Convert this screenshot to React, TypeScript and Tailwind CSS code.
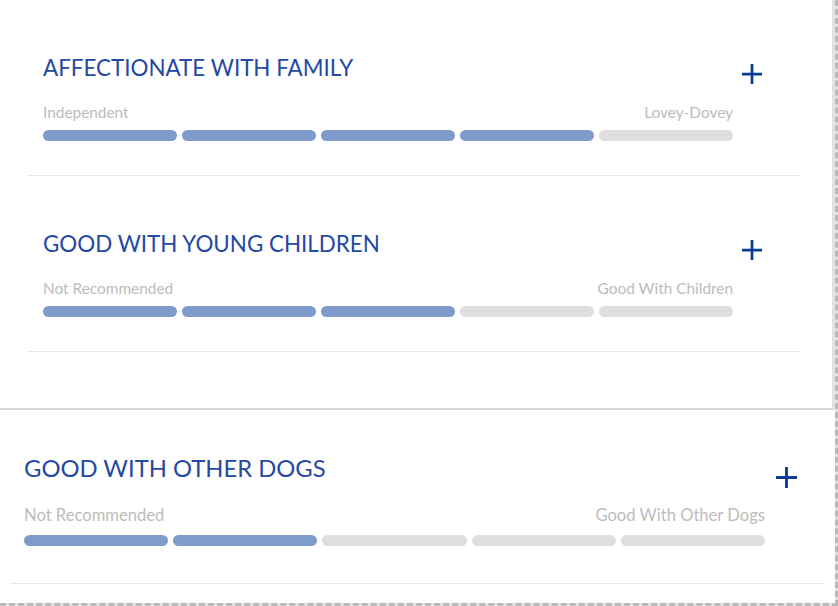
import React from "react";

type Trait = {
  title: string;
  low: string;
  high: string;
  score: number;
};

const topTraits: Trait[] = [
  { title: "AFFECTIONATE WITH FAMILY", low: "Independent", high: "Lovey-Dovey", score: 4 },
  { title: "GOOD WITH YOUNG CHILDREN", low: "Not Recommended", high: "Good With Children", score: 3 },
];

const bottomTrait: Trait = {
  title: "GOOD WITH OTHER DOGS",
  low: "Not Recommended",
  high: "Good With Other Dogs",
  score: 2,
};

const Plus = ({ size }: { size: number }) => (
  <svg width={size} height={size} viewBox="0 0 24 24" className="text-[#0b3c99]">
    <path d="M12 1v22M1 12h22" stroke="currentColor" strokeWidth="3" fill="none" />
  </svg>
);

const Bars = ({ score }: { score: number }) => (
  <div className="flex gap-[5px]">
    {[1, 2, 3, 4, 5].map((i) => (
      <div
        key={i}
        className={
          "flex-1 h-[11px] rounded-full " +
          (i <= score ? "bg-[#7f9bc9]" : "bg-[#dedede]")
        }
      />
    ))}
  </div>
);

const TraitRow = ({ trait }: { trait: Trait }) => (
  <div className="ml-[27px] mr-[32px] h-[176px] border-b border-[#e9e9e9] px-4 pt-[54px] flex items-start">
    <div className="w-[690px]">
      <h3 className="text-[22.4px] leading-[28px] text-[#2649a3]">{trait.title}</h3>
      <div className="mt-[21px] flex justify-between text-[15.4px] leading-[18px] text-[#bcbcbc]">
        <span>{trait.low}</span>
        <span>{trait.high}</span>
      </div>
      <div className="mt-[9px]">
        <Bars score={trait.score} />
      </div>
    </div>
    <div className="ml-2 mt-[9px]">
      <Plus size={22} />
    </div>
  </div>
);

export default function App() {
  return (
    <div
      className="w-[838px] h-[606px] overflow-hidden bg-[#e4e4e4] border-r-[3px] border-b-[3px] border-dashed border-[#b9b9b9]"
      style={{ fontFamily: "Lato, 'Open Sans', sans-serif" }}
    >
      <div className="w-[834px] h-[410px] bg-white border-r-2 border-[#e2e2e2] border-b-2 border-b-[#d6d6d6]">
        {topTraits.map((t) => (
          <TraitRow key={t.title} trait={t} />
        ))}
      </div>
      <div className="w-[835px] h-[193px] bg-white">
        <div className="mx-[10px] h-[174px] border-b border-[#e9e9e9] pl-[14px] pt-[43px] flex items-start">
          <div className="w-[741px]">
            <h3 className="text-[23.8px] leading-[30px] text-[#2649a3]">{bottomTrait.title}</h3>
            <div className="mt-[23px] flex justify-between text-[16.6px] leading-[19px] text-[#bcbcbc]">
              <span>{bottomTrait.low}</span>
              <span>{bottomTrait.high}</span>
            </div>
            <div className="mt-[10px]">
              <Bars score={bottomTrait.score} />
            </div>
          </div>
          <div className="ml-[10px] mt-[13px]">
            <Plus size={23} />
          </div>
        </div>
      </div>
    </div>
  );
}
